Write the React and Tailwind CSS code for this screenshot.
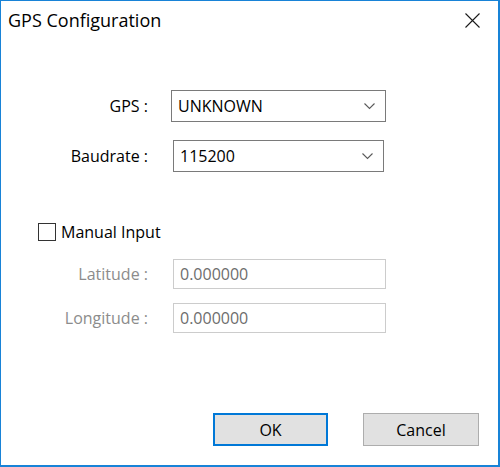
const font = { fontFamily: '"Open Sans", "Noto Sans", sans-serif' };

function Chevron() {
  return (
    <svg width="11" height="7" viewBox="0 0 11 7" className="text-[#5a5a5a]">
      <polyline points="0.5,0.5 5.5,5.5 10.5,0.5" fill="none" stroke="currentColor" strokeWidth="1.1" />
    </svg>
  );
}

function Select({ value, className }) {
  return (
    <div className={`flex h-[32px] items-center justify-between border border-[#7a7a7a] bg-white pl-[6px] pr-[10px] ${className}`}>
      <span className="text-[16px] text-black">{value}</span>
      <Chevron />
    </div>
  );
}

function Field({ value }) {
  return (
    <div className="ml-[25px] flex h-[30px] w-[213px] items-center border border-[#cccccc] bg-white pl-[6px]">
      <span className="text-[16px] text-[#6d6d6d]">{value}</span>
    </div>
  );
}

export default function App() {
  return (
    <div style={font} className="flex h-[467px] w-[500px] flex-col border-t border-l border-r-2 border-b-2 border-[#1883d7] bg-white">
      <div className="flex h-[38px] shrink-0 items-center justify-between pl-[7px] pr-[18px]">
        <span className="text-[18px] text-black">GPS Configuration</span>
        <svg width="15" height="15" viewBox="0 0 15 15">
          <path d="M0.5 0.5 L14.5 14.5 M14.5 0.5 L0.5 14.5" stroke="#1a1a1a" strokeWidth="1.1" fill="none" />
        </svg>
      </div>

      <div className="flex flex-1 flex-col">
        <div className="mt-[51px] flex items-center">
          <span className="w-[147px] text-right text-[16px] text-black">GPS :</span>
          <Select value="UNKNOWN" className="ml-[23px] w-[215px]" />
        </div>
        <div className="mt-[18px] flex items-center">
          <span className="w-[147px] text-right text-[16px] text-black">Baudrate :</span>
          <Select value="115200" className="ml-[25px] w-[211px]" />
        </div>

        <div className="mt-[48px] ml-[37px] flex items-center gap-[5px]">
          <div className="h-[18px] w-[18px] border border-[#333333] bg-white" />
          <span className="text-[16px] text-black">Manual Input</span>
        </div>

        <div className="mt-[15px] flex items-center">
          <span className="w-[147px] text-right text-[16px] text-[#8c8c8c]">Latitude :</span>
          <Field value="0.000000" />
        </div>
        <div className="mt-[14px] flex items-center">
          <span className="w-[147px] text-right text-[16px] text-[#8c8c8c]">Longitude :</span>
          <Field value="0.000000" />
        </div>

        <div className="mt-auto mb-[19px] flex items-center">
          <button type="button" className="ml-[212px] h-[33px] w-[115px] border-2 border-[#0078d7] bg-[#e1e1e1] text-[16px] text-black">
            OK
          </button>
          <button type="button" className="ml-[35px] h-[33px] w-[116px] border border-[#adadad] bg-[#e1e1e1] text-[16px] text-black">
            Cancel
          </button>
        </div>
      </div>
    </div>
  );
}
